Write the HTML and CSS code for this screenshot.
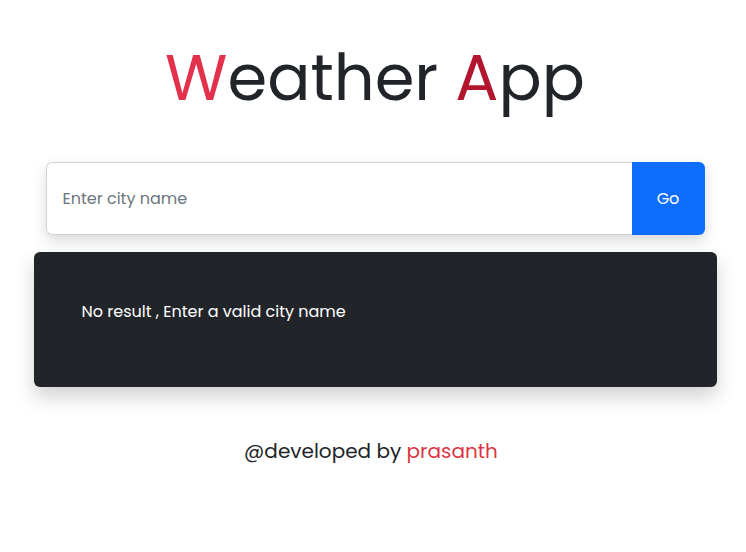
FILE: index.html
```html
<!DOCTYPE html>
<html lang="en">
<head>
<meta charset="utf-8">
<title>Weather App</title>
<link rel="stylesheet" href="styles.css">
</head>
<body>
<main class="page">
  <h1 class="title"><span class="w">W</span>eather <span class="a">A</span>pp</h1>
  <form class="search">
    <input class="search-input" type="text" placeholder="Enter city name">
    <button class="search-btn" type="button">Go</button>
  </form>
  <section class="result">
    <p class="result-text">No result , Enter a valid city name</p>
  </section>
  <footer class="footer">@developed by <span class="author">prasanth</span></footer>
</main>
</body>
</html>
```
FILE: styles.css
```css
* { box-sizing: border-box; }
html, body { margin: 0; padding: 0; background: #fff; }
body {
  font-family: "Poppins", "Open Sans", "DejaVu Sans", sans-serif;
  color: #212529;
}
.page {
  width: 746px;
  padding-left: 4px;
  display: flex;
  flex-direction: column;
  align-items: center;
}
.title {
  margin: 33px 0 0;
  height: 90px;
  font-size: 64px;
  font-weight: 400;
  line-height: 90px;
  color: #212529;
}
.title .w { color: #e3304b; }
.title .a { color: #b3142e; }
.search {
  margin-top: 39px;
  width: 659px;
  height: 73px;
  display: flex;
  border-radius: 6px;
  box-shadow: 0 6px 14px rgba(0,0,0,0.15);
}
.search-input {
  flex: 1;
  min-width: 0;
  border: 1px solid #ced4da;
  border-right: none;
  border-radius: 6px 0 0 6px;
  padding: 0 16px;
  font-family: inherit;
  font-size: 16px;
  color: #212529;
  outline: none;
  background: #fff;
}
.search-input::placeholder { color: #6c757d; }
.search-btn {
  width: 73px;
  border: none;
  border-radius: 0 6px 6px 0;
  background: #0d6efd;
  color: #fff;
  font-family: inherit;
  font-size: 16px;
  padding: 0;
}
.result {
  margin-top: 17px;
  width: 683px;
  height: 135px;
  background: #212529;
  border-radius: 6px;
  box-shadow: 0 10px 20px rgba(0,0,0,0.18);
  padding: 48px 48px;
}
.result-text {
  margin: 0;
  color: #fff;
  font-size: 16px;
  line-height: 24px;
}
.footer {
  margin: 49px 8px 0 0;
  font-size: 20px;
  line-height: 30px;
  color: #212529;
}
.author { color: #dc3545; }
```
